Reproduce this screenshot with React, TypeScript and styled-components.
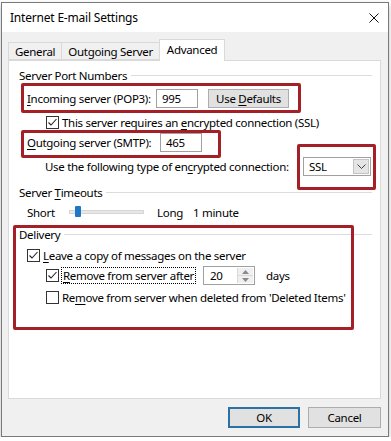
import React from "react";
import styled, { createGlobalStyle, css } from "styled-components";

const GlobalStyle = createGlobalStyle`
  html, body {
    margin: 0;
    padding: 0;
    background: #ffffff;
  }
  body {
    font-family: "Noto Sans", "Open Sans", sans-serif;
    font-size: 11.5px;
    letter-spacing: -0.3px;
    color: #000;
  }
`;

// red annotation frame drawn over a part of the dialog
const marked = css<{ $inset?: string }>`
  position: relative;
  &::after {
    content: "";
    position: absolute;
    inset: ${(p) => p.$inset};
    border: 3px solid #a41f26;
    border-radius: 2px;
    pointer-events: none;
  }
`;

const Window = styled.div`
  box-sizing: border-box;
  margin: 2px 0 0 1px;
  width: 388px;
  height: 435px;
  border: 1px solid #7a7a7a;
  box-shadow: 0 3px 6px rgba(0, 0, 0, 0.25);
  display: flex;
  flex-direction: column;
  background: #f0f0f0;
`;

const TitleBar = styled.div`
  height: 29px;
  background: #ffffff;
  display: flex;
  align-items: center;
  justify-content: space-between;
  padding: 0 9px 0 8px;
  font-size: 12px;
  letter-spacing: -0.2px;
`;

const Body = styled.div`
  flex: 1;
  display: flex;
  flex-direction: column;
  padding: 7px 7px 8px 6px;
`;

const TabStrip = styled.div`
  display: flex;
  align-items: flex-end;
  height: 21px;
  padding-left: 1px;
`;

const Tab = styled.div<{ $active?: boolean }>`
  box-sizing: border-box;
  height: ${(p) => (p.$active ? "22px" : "18px")};
  margin-bottom: ${(p) => (p.$active ? "-1px" : "0")};
  padding: ${(p) => (p.$active ? "0 7px 3px" : "0 6px")};
  display: flex;
  align-items: center;
  background: ${(p) => (p.$active ? "#ffffff" : "#f0f0f0")};
  border: 1px solid #d9d9d9;
  border-bottom: ${(p) => (p.$active ? "none" : "1px solid #d9d9d9")};
  margin-left: -1px;
  position: relative;
  z-index: ${(p) => (p.$active ? 2 : 1)};
  white-space: nowrap;
`;

const Panel = styled.div`
  box-sizing: border-box;
  width: 373px;
  height: 339px;
  background: #ffffff;
  border: 1px solid #d9d9d9;
  padding: 0 8px 0 10px;
  display: flex;
  flex-direction: column;
`;

const GroupHeader = styled.div<{ $top: number }>`
  display: flex;
  align-items: center;
  gap: 4px;
  height: 14px;
  margin-top: ${(p) => p.$top}px;
  white-space: nowrap;
  &::after {
    content: "";
    flex: 1;
    height: 1px;
    background: #dcdcdc;
  }
`;

const FieldRow = styled.div<{ $top: number; $indent: number; $inset?: string }>`
  display: flex;
  align-items: center;
  width: fit-content;
  height: 19px;
  margin-top: ${(p) => p.$top}px;
  margin-left: ${(p) => p.$indent}px;
  white-space: nowrap;
  ${(p) => (p.$inset ? marked : "")}
`;

const WideRow = styled(FieldRow)`
  width: auto;
`;

const Label = styled.span<{ $width?: number }>`
  flex-shrink: 0;
  ${(p) => (p.$width ? `width: ${p.$width}px;` : "")}
`;

const TextBox = styled.div<{ $width: number }>`
  box-sizing: border-box;
  width: ${(p) => p.$width}px;
  height: 19px;
  border: 1px solid #a0a0a0;
  background: #fff;
  padding-left: 5px;
  display: flex;
  align-items: center;
`;

const Button = styled.div<{ $width: number; $height?: number; $default?: boolean }>`
  box-sizing: border-box;
  width: ${(p) => p.$width}px;
  height: ${(p) => p.$height ?? 19}px;
  background: #e1e1e1;
  border: ${(p) => (p.$default ? "2px solid #2b72a3" : "1px solid #adadad")};
  display: flex;
  align-items: center;
  justify-content: center;
`;

const GapButton = styled(Button)`
  margin-left: 10px;
`;

const Combo = styled.div<{ $inset?: string }>`
  box-sizing: border-box;
  width: 68px;
  height: 19px;
  margin-left: auto;
  margin-right: 1px;
  border: 1px solid #a0a0a0;
  background: #fff;
  display: flex;
  align-items: center;
  padding: 1px;
  ${marked}
`;

const ComboText = styled.span`
  flex: 1;
  padding-left: 4px;
`;

const ComboArrow = styled.span`
  box-sizing: border-box;
  width: 16px;
  height: 15px;
  background: #e5e5e5;
  border: 1px solid #c4c4c4;
  display: flex;
  align-items: center;
  justify-content: center;
`;

const CheckRow = styled.div<{ $top: number; $indent: number; $height?: number }>`
  display: flex;
  align-items: center;
  gap: 3px;
  height: ${(p) => p.$height ?? 16}px;
  margin-top: ${(p) => p.$top}px;
  margin-left: ${(p) => p.$indent}px;
  white-space: nowrap;
`;

const Box = styled.span`
  box-sizing: border-box;
  width: 13px;
  height: 13px;
  flex-shrink: 0;
  border: 1px solid #333333;
  background: #fff;
  display: flex;
`;

const Focused = styled.span`
  outline: 1px dotted #000;
  padding: 0 1px;
  line-height: 15px;
`;

const Spinner = styled.div`
  box-sizing: border-box;
  width: 52px;
  height: 19px;
  margin-left: 5px;
  border: 1px solid #a0a0a0;
  background: #fff;
  display: flex;
  align-items: center;
  padding: 1px;
`;

const SpinnerText = styled.span`
  flex: 1;
  padding-left: 5px;
`;

const SpinButtons = styled.span`
  width: 15px;
  height: 15px;
  display: flex;
  flex-direction: column;
  border-left: 1px solid #d9d9d9;
`;

const SpinHalf = styled.span`
  flex: 1;
  background: #f0f0f0;
  display: flex;
  align-items: center;
  justify-content: center;
  & + & {
    border-top: 1px solid #d9d9d9;
  }
`;

const Days = styled.span`
  margin-left: 8px;
`;

const SliderRow = styled.div`
  display: flex;
  align-items: center;
  height: 14px;
  margin-top: 6px;
  margin-left: 8px;
  white-space: nowrap;
`;

const Track = styled.div`
  position: relative;
  box-sizing: border-box;
  width: 75px;
  height: 4px;
  background: #e7e7e7;
  border: 1px solid #d6d6d6;
  margin-right: 13px;
`;

const Thumb = styled.span`
  position: absolute;
  left: 5px;
  top: -5px;
  width: 6px;
  height: 11px;
  background: #1f77c8;
  border-radius: 1px;
`;

const DeliverySection = styled.div<{ $inset?: string }>`
  display: flex;
  flex-direction: column;
  margin-top: 8px;
  ${marked}
`;

const Footer = styled.div`
  display: flex;
  justify-content: flex-end;
  gap: 8px;
  margin-top: 8px;
  width: 373px;
`;

const Key = styled.u`
  text-underline-offset: 2px;
`;

const Check = ({ checked }: { checked?: boolean }) => (
  <Box>
    {checked && (
      <svg width="11" height="11" viewBox="0 0 11 11">
        <path d="M1.5 5.5 L4 8 L9.5 2" fill="none" stroke="#222" strokeWidth="1.1" />
      </svg>
    )}
  </Box>
);

export default function App() {
  return (
    <>
      <GlobalStyle />
      <Window>
        <TitleBar>
          <span>Internet E-mail Settings</span>
          <svg width="10" height="10" viewBox="0 0 10 10">
            <path d="M0.5 0.5 L9.5 9.5 M9.5 0.5 L0.5 9.5" stroke="#111" strokeWidth="1" />
          </svg>
        </TitleBar>
        <Body>
          <TabStrip>
            <Tab>General</Tab>
            <Tab>Outgoing Server</Tab>
            <Tab $active>Advanced</Tab>
          </TabStrip>
          <Panel>
            <GroupHeader $top={7}>Server Port Numbers</GroupHeader>
            <FieldRow $top={7} $indent={8} $inset="-6px -12px -5px -6px">
              <Label $width={129}>
                <Key>I</Key>ncoming server (POP3):
              </Label>
              <TextBox $width={42}>995</TextBox>
              <GapButton $width={81}>
                Use&nbsp;<Key>D</Key>efaults
              </GapButton>
            </FieldRow>
            <CheckRow $top={6} $indent={27}>
              <Check checked />
              <span>
                This server requires an <Key>e</Key>ncrypted connection (SSL)
              </span>
            </CheckRow>
            <FieldRow $top={3} $indent={8} $inset="-3px -19px -6px -6px">
              <Label $width={133}>
                <Key>O</Key>utgoing server (SMTP):
              </Label>
              <TextBox $width={42}>465</TextBox>
            </FieldRow>
            <WideRow $top={5} $indent={26}>
              <Label>
                Use the following type of en<Key>c</Key>rypted connection:
              </Label>
              <Combo $inset="-14px -6px -15px -7px">
                <ComboText>SSL</ComboText>
                <ComboArrow>
                  <svg width="9" height="6" viewBox="0 0 9 6">
                    <path d="M0.5 0.5 L4.5 4.5 L8.5 0.5" fill="none" stroke="#444" strokeWidth="1" />
                  </svg>
                </ComboArrow>
              </Combo>
            </WideRow>
            <GroupHeader $top={9}>
              <span>
                Server <Key>T</Key>imeouts
              </span>
            </GroupHeader>
            <SliderRow>
              <Label $width={42}>Short</Label>
              <Track>
                <Thumb />
              </Track>
              <Label $width={36}>Long</Label>
              <span>1 minute</span>
            </SliderRow>
            <DeliverySection $inset="-2px 18px -25px -6px">
              <GroupHeader $top={0}>Delivery</GroupHeader>
              <CheckRow $top={6} $indent={8}>
                <Check checked />
                <span>
                  <Key>L</Key>eave a copy of messages on the server
                </span>
              </CheckRow>
              <CheckRow $top={3} $indent={27} $height={19}>
                <Check checked />
                <Focused>
                  <Key>R</Key>emove from server after
                </Focused>
                <Spinner>
                  <SpinnerText>20</SpinnerText>
                  <SpinButtons>
                    <SpinHalf>
                      <svg width="7" height="4" viewBox="0 0 7 4">
                        <path d="M0 4 L3.5 0 L7 4 Z" fill="#8a8a8a" />
                      </svg>
                    </SpinHalf>
                    <SpinHalf>
                      <svg width="7" height="4" viewBox="0 0 7 4">
                        <path d="M0 0 L3.5 4 L7 0 Z" fill="#8a8a8a" />
                      </svg>
                    </SpinHalf>
                  </SpinButtons>
                </Spinner>
                <Days>days</Days>
              </CheckRow>
              <CheckRow $top={4} $indent={27}>
                <Check />
                <span>
                  Re<Key>m</Key>ove from server when deleted from 'Deleted Items'
                </span>
              </CheckRow>
            </DeliverySection>
          </Panel>
          <Footer>
            <Button $width={72} $height={21} $default>
              OK
            </Button>
            <Button $width={73} $height={21}>
              Cancel
            </Button>
          </Footer>
        </Body>
      </Window>
    </>
  );
}
